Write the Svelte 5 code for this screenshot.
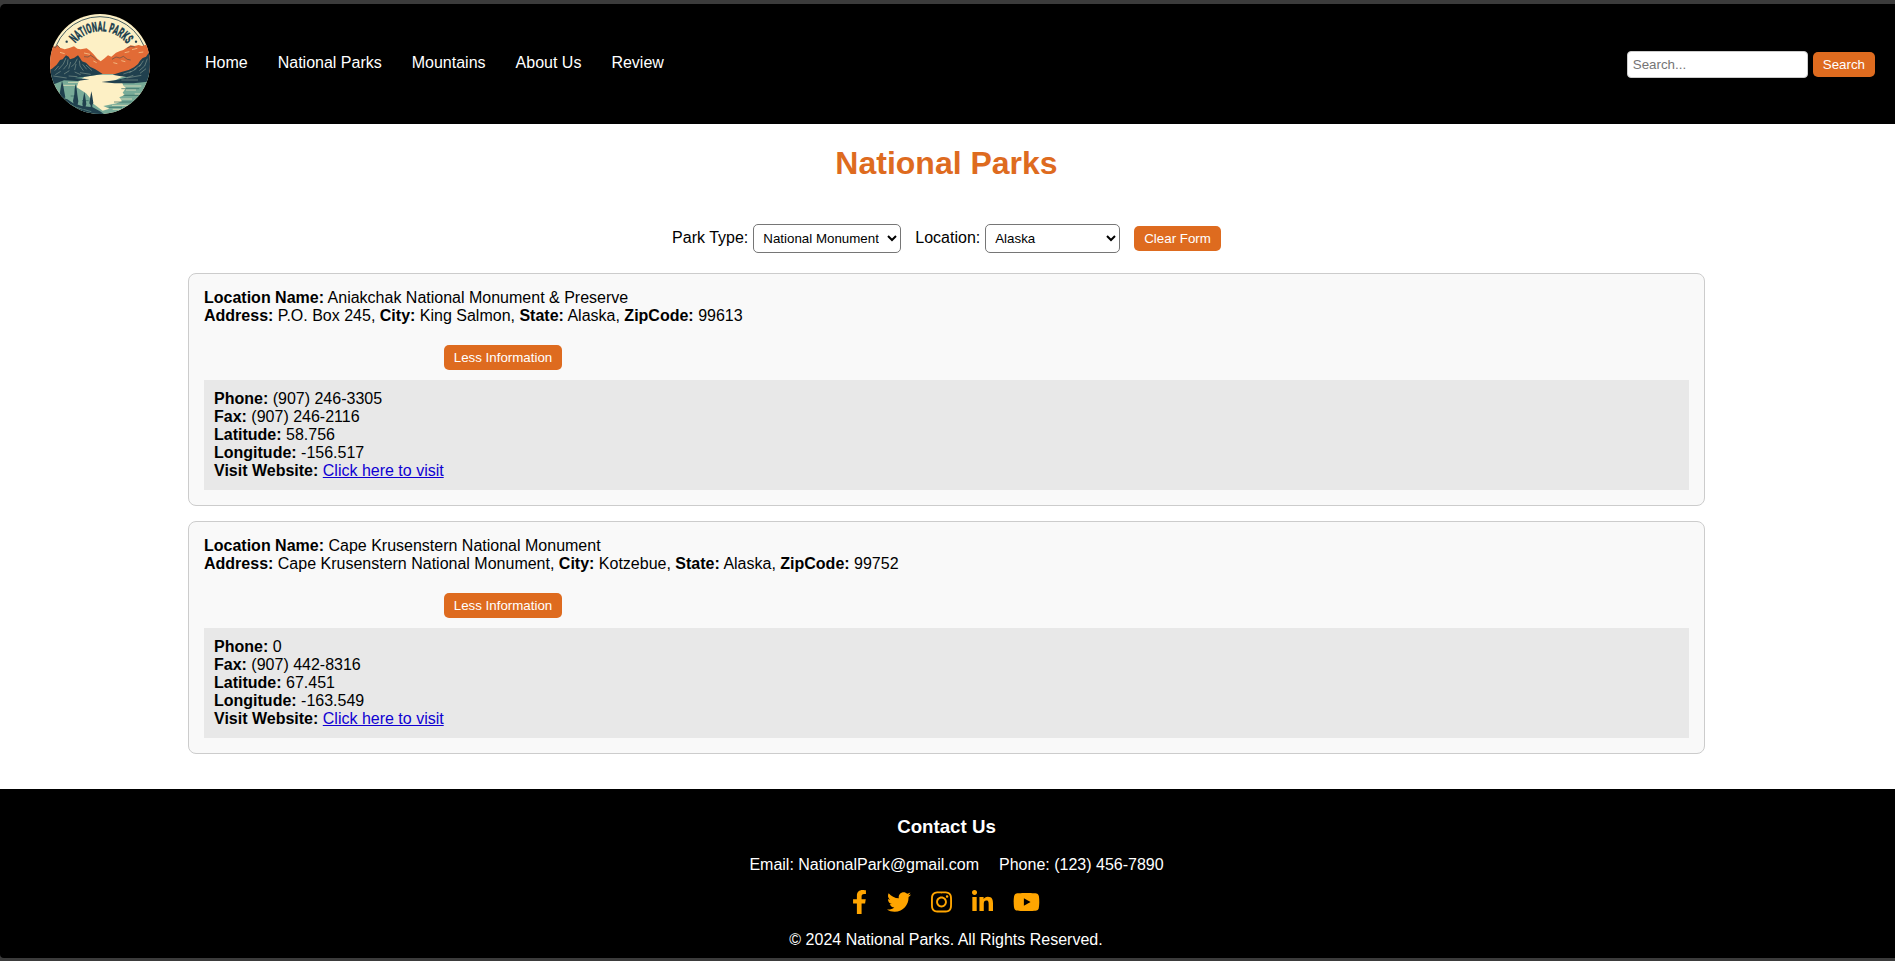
<script>
  const links = ['Home', 'National Parks', 'Mountains', 'About Us', 'Review'];

  let parkType = $state('National Monument');
  let location = $state('Alaska');

  let parks = $state([
    {
      name: 'Aniakchak National Monument & Preserve',
      address: 'P.O. Box 245',
      city: 'King Salmon',
      state: 'Alaska',
      zip: '99613',
      phone: '(907) 246-3305',
      fax: '(907) 246-2116',
      lat: 58.756,
      lng: -156.517,
      open: true
    },
    {
      name: 'Cape Krusenstern National Monument',
      address: 'Cape Krusenstern National Monument',
      city: 'Kotzebue',
      state: 'Alaska',
      zip: '99752',
      phone: '0',
      fax: '(907) 442-8316',
      lat: 67.451,
      lng: -163.549,
      open: true
    }
  ]);

  const social = [
    { name: 'Facebook', w: 320, d: 'M279.14 288l14.22-92.66h-88.91v-60.13c0-25.35 12.42-50.06 52.24-50.06h40.42V6.26S260.43 0 225.36 0c-73.22 0-121.08 44.38-121.08 124.72v70.62H22.89V288h81.39v224h100.17V288z' },
    { name: 'Twitter', w: 512, d: 'M459.37 151.716c.325 4.548.325 9.097.325 13.645 0 138.72-105.583 298.558-298.558 298.558-59.452 0-114.68-17.219-161.137-47.106 8.447.974 16.568 1.299 25.34 1.299 49.055 0 94.213-16.568 130.274-44.832-46.132-.975-84.792-31.188-98.112-72.772 6.498.974 12.995 1.624 19.818 1.624 9.421 0 18.843-1.3 27.614-3.573-48.081-9.747-84.143-51.98-84.143-102.985v-1.299c13.969 7.797 30.214 12.67 47.431 13.319-28.264-18.843-46.781-51.005-46.781-87.391 0-19.492 5.197-37.36 14.294-52.954 51.655 63.675 129.3 105.258 216.365 109.807-1.624-7.797-2.599-15.918-2.599-24.04 0-57.828 46.782-104.934 104.934-104.934 30.213 0 57.502 12.67 76.67 33.137 23.715-4.548 46.456-13.32 66.599-25.34-7.798 24.366-24.366 44.833-46.132 57.827 21.117-2.273 41.584-8.122 60.426-16.243-14.292 20.791-32.161 39.308-52.628 54.253z' },
    { name: 'Instagram', w: 448, d: 'M224.1 141c-63.6 0-114.9 51.3-114.9 114.9s51.3 114.9 114.9 114.9S339 319.5 339 255.9 287.7 141 224.1 141zm0 189.6c-41.1 0-74.7-33.5-74.7-74.7s33.5-74.7 74.7-74.7 74.7 33.5 74.7 74.7-33.6 74.7-74.7 74.7zm146.4-194.3c0 14.9-12 26.8-26.8 26.8-14.9 0-26.8-12-26.8-26.8s12-26.8 26.8-26.8 26.8 12 26.8 26.8zm76.1 27.2c-1.7-35.9-9.9-67.7-36.2-93.9-26.2-26.2-58-34.4-93.9-36.2-37-2.1-147.9-2.1-184.9 0-35.8 1.7-67.6 9.9-93.9 36.1s-34.4 58-36.2 93.9c-2.1 37-2.1 147.9 0 184.9 1.7 35.9 9.9 67.7 36.2 93.9s58 34.4 93.9 36.2c37 2.1 147.9 2.1 184.9 0 35.9-1.7 67.7-9.9 93.9-36.2 26.2-26.2 34.4-58 36.2-93.9 2.1-37 2.1-147.8 0-184.8zM398.8 388c-7.8 19.6-22.9 34.7-42.6 42.6-29.5 11.7-99.5 9-132.1 9s-102.7 2.6-132.1-9c-19.6-7.8-34.7-22.9-42.6-42.6-11.7-29.5-9-99.5-9-132.1s-2.6-102.7 9-132.1c7.8-19.6 22.9-34.7 42.6-42.6 29.5-11.7 99.5-9 132.1-9s102.7-2.6 132.1 9c19.6 7.8 34.7 22.9 42.6 42.6 11.7 29.5 9 99.5 9 132.1s2.7 102.7-9 132.1z' },
    { name: 'LinkedIn', w: 448, d: 'M100.28 448H7.4V148.9h92.88zM53.79 108.1C24.09 108.1 0 83.5 0 53.8a53.79 53.79 0 0 1 107.58 0c0 29.7-24.1 54.3-53.79 54.3zM447.9 448h-92.68V302.4c0-34.7-.7-79.2-48.29-79.2-48.29 0-55.69 37.7-55.69 76.7V448h-92.78V148.9h89.08v40.8h1.3c12.4-23.5 42.69-48.3 87.88-48.3 94 0 111.28 61.9 111.28 142.3V448z' },
    { name: 'YouTube', w: 576, d: 'M549.655 124.083c-6.281-23.65-24.787-42.276-48.284-48.597C458.781 64 288 64 288 64S117.22 64 74.629 75.486c-23.497 6.322-42.003 24.947-48.284 48.597-11.412 42.867-11.412 132.305-11.412 132.305s0 89.438 11.412 132.305c6.281 23.65 24.787 41.5 48.284 47.821C117.22 448 288 448 288 448s170.78 0 213.371-11.486c23.497-6.321 42.003-24.171 48.284-47.821 11.412-42.867 11.412-132.305 11.412-132.305s0-89.438-11.412-132.305zm-317.51 213.508V175.185l142.739 81.205-142.739 81.201z' }
  ];

  function clearForm() {
    parkType = '';
    location = '';
  }
</script>

<div class="page">
  <header>
    <svg class="logo" viewBox="30 42 300 300">
      <defs>
        <clipPath id="disc"><circle cx="180" cy="192" r="150" /></clipPath>
        <path id="lettering" d="M84.2 192A98 98 0 0 1 280.2 192" />
      </defs>
      <g clip-path="url(#disc)">
        <rect x="30" y="42" width="300" height="300" fill="#fdf0c5" />
        <circle cx="180" cy="193" r="143" fill="none" stroke="#2b4851" stroke-width="2.6" />
        <!-- orange range -->
        <path fill="#e26b36" d="M28 146L38 138 46 140 52 134 60 143 74 148 88 144 102 139 112 146 122 148 140 145 150 152 160 162 172 176 182 184 192 176 204 166 214 170 228 158 240 153 250 150 262 142 272 136 284 138 296 135 306 138 318 134 332 140V226H28z" />
        <path fill="none" stroke="#2b4851" stroke-width="1.5" d="M132 170l12 1 8-5 12 8 8 7M216 178l12-7 12 3 10-5 12 9 10 2M40 140l6 3 6-7 8 8M262 144l10-5 12 2" />
        <path fill="none" stroke="#fbdba2" stroke-width="2" d="M132 159l18 4M160 183l10 5M220 188l12 3M254 158l14-3M276 149l16-4M60 157l14 4M296 158l14-2M244 182l12 3" />
        <!-- lake -->
        <path fill="#78ab98" d="M28 222H332V344H28z" />
        <path fill="#fdf0c5" d="M134 230L176 224H238L276 226 244 232 222 242 246 247 250 257 258 264 248 278 254 285 238 292 246 304 230 310 190 318 208 326 188 332 158 310 150 294 138 280 110 262 116 244z" />
        <path fill="none" stroke="#fdf0c5" stroke-width="2" d="M248 258h56M258 270h30M236 297h40M216 316h60M218 328h24M284 282h26M66 256h40M84 247h30" />
        <path fill="none" stroke="#2e655f" stroke-width="2" d="M244 266h54M250 286h54M222 306h66M206 322h40M92 288h10M126 302h20" />
        <!-- dark slopes -->
        <path fill="#20404e" d="M28 210L36 206 50 194 60 180 68 178 78 166 86 170 90 178 102 174 114 166 120 174 126 184 138 188 150 200 166 208 188 222 150 228 130 231 104 234 148 238 112 243 72 241 28 258z" />
        <path fill="#20404e" d="M332 150L318 170 308 174 300 182 294 192 282 202 266 210 244 216 218 224 238 228 264 232 230 240 184 246 224 250 280 250 332 244z" />
        <path fill="none" stroke="#a9b9a8" stroke-width="1.4" d="M78 174l-8 18-14 16M84 178l-2 16-12 14M92 186l-6 20M112 176l-8 16-10 8M118 182l2 16 10 14M128 193l12 15M138 195l18 17M108 192l-4 18M56 198l-12 14M62 214l-16 10M88 212l-16 10M104 216l18 8M120 218l32 5M310 182l-12 18M322 176l-8 22-16 14M302 194l-20 15M290 206l-22 12M318 206l-18 14M274 214l-24 8M280 226l-20 7M40 228l40 6M86 228l26 2M244 240h50M260 234l44-8" />
        <!-- foreground shore and pines -->
        <path fill="#20404e" d="M28 276L46 284 62 292 82 298 100 310 126 318 158 322 180 334 198 346H28z" />
        <path fill="none" stroke="#78ab98" stroke-width="1.6" d="M66 300l20 9M84 310l22 10M106 321l22 7M130 328l24 7" />
        <path fill="#20404e" d="M66 242l4 16 3 18 3 16-4 4v12h-9v-12l-6-3 3-18 3-17zM107 252l3 14 2 18 3 20-3 14h-10l-3-15 4-20 1-17zM133 276l3 16 3 20-3 10h-7l-2-10 3-20zM154 274l3 15 3 20-3 6v10h-5v-9l-4-6 3-20z" />
      </g>
      <circle cx="80" cy="125" r="3.5" fill="#20404e" />
      <circle cx="288" cy="125" r="3.5" fill="#20404e" />
      <text class="logo-text"><textPath href="#lettering" startOffset="66" textLength="178" lengthAdjust="spacingAndGlyphs">NATIONAL PARKS</textPath></text>
    </svg>

    <nav>
      {#each links as link}<a href="#top">{link}</a>{/each}
    </nav>

    <form class="search" onsubmit={(e) => e.preventDefault()}>
      <input type="text" placeholder="Search..." />
      <button>Search</button>
    </form>
  </header>

  <main>
    <h1>National Parks</h1>

    <div class="filters">
      <label for="type">Park Type:</label>
      <select id="type" class="type" bind:value={parkType}>
        <option value=""></option>
        <option>National Monument</option>
      </select>
      <label for="loc">Location:</label>
      <select id="loc" class="loc" bind:value={location}>
        <option value=""></option>
        <option>Alaska</option>
      </select>
      <button onclick={clearForm}>Clear Form</button>
    </div>

    <div class="cards">
      {#each parks as p}
        <article>
          <div><b>Location Name:</b> {p.name}</div>
          <div><b>Address:</b> {p.address}, <b>City:</b> {p.city}, <b>State:</b> {p.state}, <b>ZipCode:</b> {p.zip}</div>
          <button class="toggle" onclick={() => (p.open = !p.open)}>{p.open ? 'Less' : 'More'} Information</button>
          {#if p.open}
            <div class="details">
              <div><b>Phone:</b> {p.phone}</div>
              <div><b>Fax:</b> {p.fax}</div>
              <div><b>Latitude:</b> {p.lat}</div>
              <div><b>Longitude:</b> {p.lng}</div>
              <div><b>Visit Website:</b> <a href="#visit">Click here to visit</a></div>
            </div>
          {/if}
        </article>
      {/each}
    </div>
  </main>

  <footer>
    <h3>Contact Us</h3>
    <div class="contact">
      <span>Email: NationalPark@gmail.com</span>
      <span>Phone: (123) 456-7890</span>
    </div>
    <div class="social">
      {#each social as s}
        <svg viewBox="0 0 {s.w} 512" width={(s.w / 512) * 24} height="24" role="img" aria-label={s.name}><path d={s.d} /></svg>
      {/each}
    </div>
    <div class="copy">© 2024 National Parks. All Rights Reserved.</div>
  </footer>
</div>

<style>
  :global(body) {
    margin: 0;
    background: #3b3b3b;
    overflow: hidden;
  }
  .page {
    box-sizing: border-box;
    height: 961px;
    padding: 4px 0 3px;
    display: flex;
    flex-direction: column;
    font: 16px/18px Arial, "Liberation Sans", sans-serif;
    color: #000;
  }
  header {
    box-sizing: border-box;
    height: 120px;
    flex: none;
    display: flex;
    align-items: center;
    padding: 0 20px 0 50px;
    background: #000;
    border-top-left-radius: 5px;
  }
  .logo {
    width: 100px;
    height: 100px;
    display: block;
  }
  .logo-text {
    font: 900 41px Roboto, sans-serif;
    fill: #20404e;
    stroke: #20404e;
    stroke-width: 0.8px;
  }
  nav {
    display: flex;
    gap: 30px;
    margin-left: 55px;
    padding-bottom: 2px;
  }
  nav a {
    color: #fff;
    text-decoration: none;
  }
  .search {
    display: flex;
    align-items: center;
    gap: 5px;
    margin-left: auto;
  }
  input {
    box-sizing: border-box;
    width: 181px;
    height: 27px;
    padding: 5px;
    border: 1px solid #ccc;
    border-radius: 4px;
    font: 13.333px Arial, "Liberation Sans", sans-serif;
  }
  button {
    height: 25px;
    padding: 0 10px;
    border: 0;
    border-radius: 5px;
    background: #de6b1f;
    color: #fff;
    font: 13.333px Arial, "Liberation Sans", sans-serif;
  }
  main {
    flex: 1;
    padding-right: 2px;
    background: #fff;
    display: flex;
    flex-direction: column;
    align-items: center;
  }
  h1 {
    margin: 21px 0 0;
    font-size: 32px;
    line-height: 36px;
    color: #de6b1f;
  }
  .filters {
    display: flex;
    align-items: center;
    height: 29px;
    margin-top: 43px;
  }
  label {
    margin-right: 5px;
    padding-bottom: 2px;
  }
  select {
    box-sizing: border-box;
    height: 29px;
    padding: 5px;
    border: 1px solid #767676;
    border-radius: 5px;
    background: #fff;
    color: #000;
    font: 13.333px Arial, "Liberation Sans", sans-serif;
  }
  .type {
    width: 148px;
    margin-right: 14px;
  }
  .loc {
    width: 135px;
    margin-right: 14px;
  }
  .cards {
    width: 1517px;
    margin-top: 20px;
    display: flex;
    flex-direction: column;
    gap: 15px;
  }
  article {
    padding: 15px;
    border: 1px solid #ccc;
    border-radius: 8px;
    background: #f9f9f9;
  }
  .toggle {
    display: block;
    width: 118px;
    padding: 0;
    margin: 20px 0 10px 240px;
  }
  .details {
    padding: 10px;
    background: #e8e8e8;
  }
  .details a {
    color: #0f00d2;
  }
  footer {
    box-sizing: border-box;
    height: 169px;
    flex: none;
    padding: 27px 2px 0 0;
    display: flex;
    flex-direction: column;
    align-items: center;
    background: #000;
    color: #fff;
    border-bottom-left-radius: 4px;
  }
  h3 {
    margin: 0;
    font-size: 18.72px;
    line-height: 22px;
  }
  .contact {
    display: flex;
    margin-top: 18px;
  }
  .contact span {
    margin-left: 20px;
  }
  .social {
    display: flex;
    gap: 20px;
    margin: 16px 1px 0 0;
  }
  .social svg {
    fill: #ffa500;
    display: block;
  }
  .copy {
    margin: 17px 1px 0 0;
  }
</style>
